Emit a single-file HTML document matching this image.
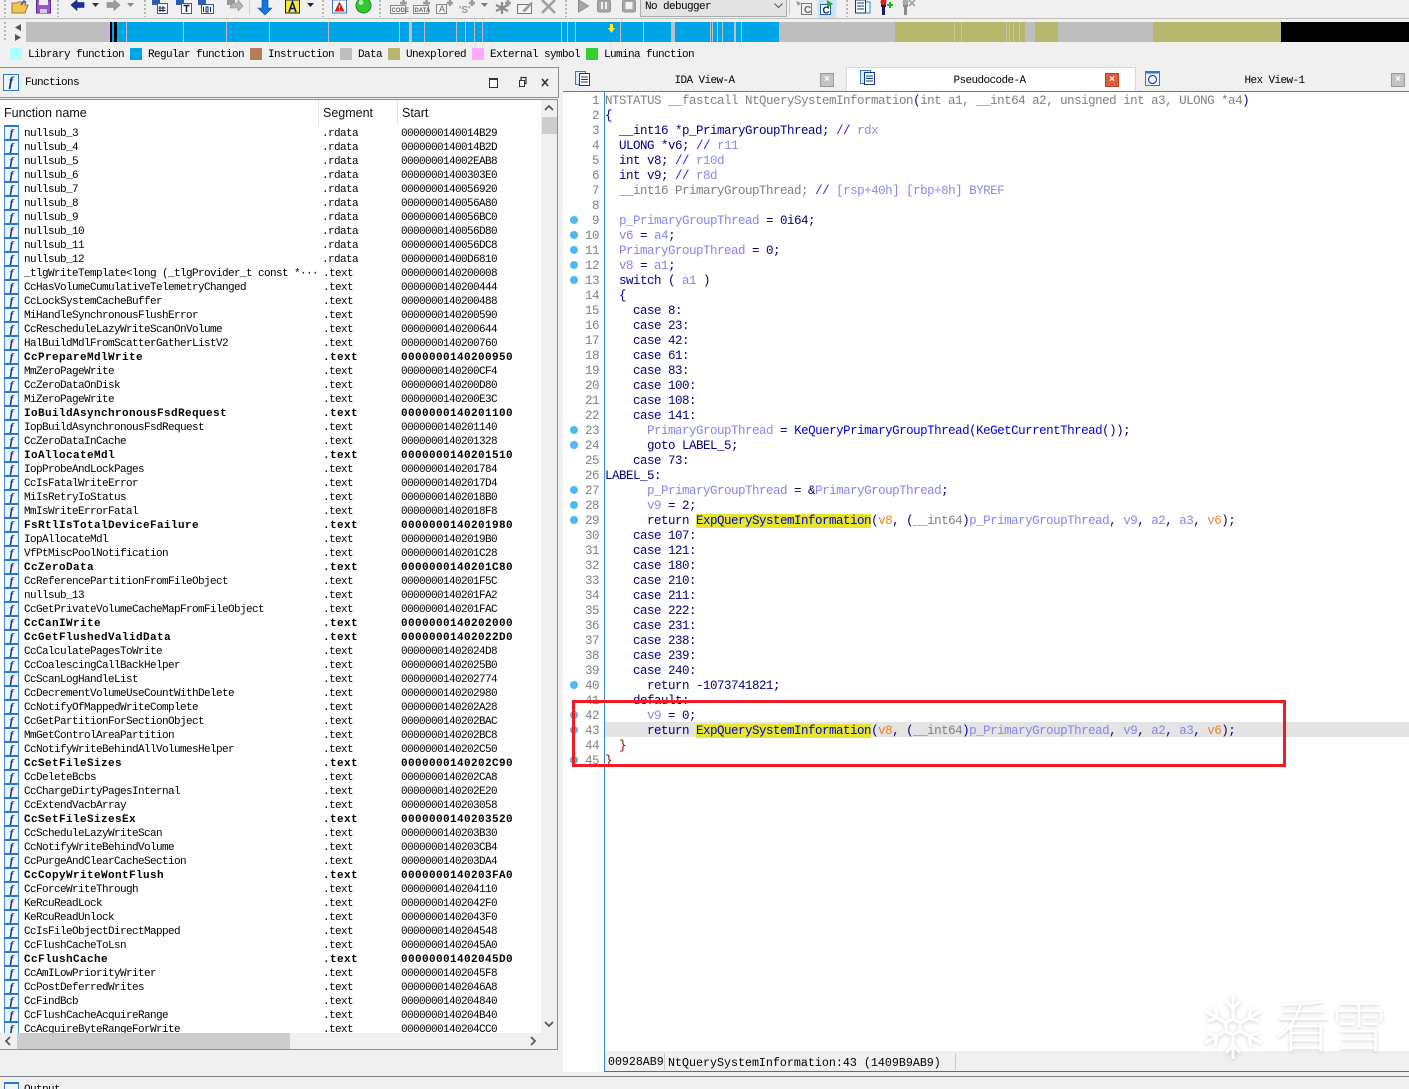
<!DOCTYPE html>
<html style="width:1409px;height:1089px;overflow:hidden"><head><meta charset="utf-8"><title>IDA</title>
<style>
html,body{margin:0;padding:0}
body{width:1409px;height:1089px;overflow:hidden;background:#f0f0f0;position:relative;font-family:"Liberation Mono",monospace;color:#000}
.a,.a2{position:absolute}
svg{position:absolute;overflow:visible}
.leg{position:absolute;top:49px;font-size:11px;letter-spacing:-.6px;line-height:13px;white-space:pre}
.sw{position:absolute;top:48px;width:12px;height:12px}
.nv{position:absolute;top:22px;height:20px}
.gp{position:absolute;top:22px;height:20px;width:1px;background:#b8c4cc}
.grip{position:absolute;top:0;width:2px;height:17px;background:repeating-linear-gradient(#b5b5b5 0 2px,transparent 2px 4px)}
#list{position:absolute;left:0;top:125px;width:541px;height:908px;overflow:hidden;background:#fff}
#list p{margin:0;height:14px;position:relative;font-size:11px;line-height:14px;letter-spacing:-.6px;white-space:pre}
#list i{position:absolute;left:4px;top:0;width:13px;height:12px;border:1px solid #4a8ed6;border-top:2px solid #2f78cc;border-bottom:0;background:#eef5fc;font:italic bold 12px/12px "Liberation Serif",serif;color:#123a80;text-align:center;letter-spacing:0}
#list b,#list u,#list s{position:absolute;top:2px;text-decoration:none;font-weight:normal}
#list b{left:24px}#list u{left:322px}#list s{left:401px}
#list u.t{left:323px}
#list p.h b,#list p.h u,#list p.h s{font-weight:bold;letter-spacing:.4px}
#code{position:absolute;left:0;top:92px;width:1409px;font-size:12.5px;line-height:15px;letter-spacing:-.5px;color:#000080}
#code div{position:relative;height:15px;box-sizing:border-box;padding-left:605px;padding-top:2px;white-space:pre}
#code div>em{position:absolute;left:563px;width:36px;text-align:right;font-style:normal;color:#808080}
#code div.d::before{content:"";position:absolute;left:570px;top:4px;width:8px;height:8px;border-radius:50%;background:#4fb8f2}
.g{color:#808080}.l{color:#8585ee}.c{color:#2222ee}.f{color:#0000e0}.o{color:#f08020}.y{background:#e6e632;color:#0000c8}.m{color:#800000}.t{color:#8a8aee}
#list u.t{color:#000}
.tab{position:absolute;top:68px;height:23px;font-size:11px;letter-spacing:-.6px;line-height:26px;text-align:center}
.x{position:absolute;top:73px;width:12px;height:12px;border:1px solid #999;background:#c4c4c4;color:#fff;font:bold 10px/12px "Liberation Sans",sans-serif;text-align:center}
.hd{position:absolute;top:105px;font:12.5px/16px "Liberation Sans",sans-serif;color:#111}
</style></head>
<body>

<!-- toolbar -->
<div class="a" style="left:0;top:18px;width:1409px;height:1px;background:#bdbdbd"></div>
<div class="grip" style="left:4px"></div><div class="grip" style="left:57px"></div><div class="grip" style="left:144px"></div><div class="grip" style="left:322px"></div><div class="grip" style="left:379px"></div><div class="grip" style="left:565px"></div><div class="grip" style="left:846px"></div>
<div class="a" style="left:249px;top:0;width:1px;height:15px;background:#d0d0d0"></div>
<div class="a" style="left:789px;top:0;width:1px;height:15px;background:#c8c8c8"></div>

<svg style="left:0;top:0" width="1000" height="18" viewBox="0 0 1000 18">
<path d="M12 13V3h5l1-1h7v3h3l-3 8z" fill="#f2c552" stroke="#a57a1c"/><path d="M21 5l3-4 2 2" stroke="#2b5bc8" fill="none" stroke-width="1.5"/>
<path d="M36.500 0h14v13h-14z" fill="#9a55c8" stroke="#5a2a90"/><path d="M39 0h9v5h-9z" fill="#eee"/><path d="M40 9h7v4h-7z" fill="#d8c8e8"/>
<path d="M71 5l6-5v2.500h7v5h-7v3z" fill="#1c2f9c" stroke="#0c1a70" stroke-width=".6"/>
<path d="M92 3h7l-3.500 4z" fill="#333"/>
<path d="M120 5l-6-5v2.500h-7v5h7v3z" fill="#9c9c9c" stroke="#808080" stroke-width=".6"/>
<path d="M127 3h7l-3.500 4z" fill="#8a8a8a"/>
<g><path d="M152 0h8v5h-8z" fill="#2b5fae"/><rect x="157.500" y="3.500" width="10" height="10" fill="#fff" stroke="#2b5fae"/><path d="M160 6v6M163 6v6M158.500 8h7M158.500 10.500h7" stroke="#102050"/></g>
<g><path d="M176 0h8v5h-8z" fill="#2b5fae"/><rect x="181.500" y="3.500" width="10" height="10" fill="#fff" stroke="#2b5fae"/><path d="M183.500 5.500h6M186.500 5.500v6.500" stroke="#102050" stroke-width="1.500"/></g>
<g><path d="M198 0h8v5h-8z" fill="#2b5fae"/><rect x="201.500" y="4.500" width="12" height="9" fill="#fff" stroke="#2b5fae"/><path d="M203.500 7v5M206 7h2v5h-2zM210.500 7v5" stroke="#102050" fill="none"/></g>
<g><path d="M227 0h8v5h-8z" fill="#999"/><path d="M232 3h6V0l5 6-5 5V8h-8z" fill="#b5b5b5" stroke="#8a8a8a" stroke-width=".6"/></g>
<path d="M262 0h6v8h4l-7 7-7-7h4z" fill="#1474dc" stroke="#0d4fa8" stroke-width=".6"/>
<rect x="285.500" y="0" width="14" height="13" fill="#f4ec20" stroke="#10108a"/><path d="M289 12l3.500-10 3.500 10M290.200 8.500h4.600" stroke="#10108a" stroke-width="1.600" fill="none"/>
<path d="M307 3h7l-3.500 4z" fill="#222"/>
<rect x="332.500" y="0" width="14" height="13" fill="#fff" stroke="#3c78c8"/><path d="M339.500 1.500l5 10h-10z" fill="#d02020"/><path d="M339.500 5v3.500M339.500 9.500v1" stroke="#fff"/>
<circle cx="363.500" cy="5.500" r="7.500" fill="#32c832" stroke="#1c8c1c"/><circle cx="361" cy="2.500" r="2.500" fill="#a8f0a8"/>
<g stroke="#888" fill="#f6f6f6">
<rect x="390.500" y="5.500" width="15" height="8"/><rect x="413.500" y="5.500" width="15" height="8"/><rect x="436.500" y="4.500" width="10" height="9"/></g>
<g stroke="#999" stroke-width="2.400"><path d="M400 3h7M403.500 0v6M423 3h7M426.500 0v6M447 3h6M450 0v6M469 3h6M472 0v6M505 3h6M508 0v6"/></g>
<g font-family="Liberation Sans,sans-serif" fill="#666">
<text x="391.500" y="12" font-size="6" font-weight="bold">CODE</text>
<text x="414.500" y="12" font-size="6" font-weight="bold">DATA</text>
<text x="439" y="12" font-size="9">A</text>
<text x="459" y="13" font-size="10" font-weight="bold" fill="#999">'S'</text></g>
<path d="M481 3h7l-3.500 4z" fill="#777"/>
<path d="M502 2v12M496 5l12 6M508 5l-12 6" stroke="#8a8a8a" stroke-width="2.200"/>
<rect x="517.500" y="4.500" width="14" height="9" fill="#f4f4f4" stroke="#777"/><path d="M522 11l9-9 2 1-8 9z" fill="#999"/>
<path d="M542 0l13 13M555 0l-13 13" stroke="#a0a0a0" stroke-width="2.600"/>
<path d="M578.500 0v12l10-6z" fill="#a8a8a8" stroke="#8a8a8a"/>
<rect x="597.500" y="0" width="13" height="12" rx="2" fill="#a8a8a8" stroke="#909090"/><path d="M602 2v7M606 2v7" stroke="#eee" stroke-width="2"/>
<rect x="622.500" y="0" width="13" height="12" rx="2" fill="#a8a8a8" stroke="#909090"/><rect x="625.500" y="2" width="7" height="7" fill="#f4f4f4"/>
<rect x="817.500" y="0" width="19" height="18" fill="#cce4f7"/>
<rect x="801.500" y="3.500" width="10" height="11" fill="#f0f0f0" stroke="#777"/>
<path d="M796 1l5 2-3 3z" fill="#999"/>
<text x="804" y="13" font-family="Liberation Sans,sans-serif" font-size="10" font-weight="bold" fill="#666">C</text>
<rect x="820.500" y="4.500" width="10" height="10" fill="#fff" stroke="#2a5aa0"/><path d="M827 0l6 4-6 4z" fill="#2ea82e"/>
<text x="822.500" y="13.500" font-family="Liberation Sans,sans-serif" font-size="10" font-weight="bold" fill="#10206a">C</text>
<rect x="855.500" y="0" width="10" height="13" fill="#fff" stroke="#123a80"/><path d="M857 3h7M857 6h7M857 9h7" stroke="#123a80"/><path d="M866 2h4v11h-4" fill="#dff" stroke="#3a80d0"/>
<path d="M881 0h5v7h-1v8h-3V7h-1z" fill="#1a1a60"/><circle cx="883.500" cy="2" r="3" fill="#e02020"/><path d="M887 5h6M890 2v6" stroke="#20b020" stroke-width="2"/>
<path d="M903 0h5v7h-1v8h-3V7h-1z" fill="#8a8a8a"/><circle cx="905.500" cy="2" r="3" fill="#aaa"/><path d="M909 0l6 6M915 0l-6 6" stroke="#999" stroke-width="1.500"/>
</svg>
<div class="a" style="left:640px;top:-2px;width:145px;height:17px;border:1px solid #adadad;background:#e4e4e4;font-size:11px;letter-spacing:-.6px;line-height:17px;text-indent:4px">No debugger</div>
<svg style="left:774px;top:3px" width="9" height="6"><path d="M0.500 0.500l4 4 4-4" fill="none" stroke="#555"/></svg>

<!-- nav band -->
<div class="grip" style="left:4px;top:22px;height:20px"></div>
<svg style="left:12px;top:24px" width="10" height="18"><path d="M9 0v7L3 3.500z" fill="#555"/><path d="M3 10v7l6-3.500z" fill="#555"/></svg>
<div class="nv" style="left:26px;width:82px;background:#bebebe"></div>
<div class="nv" style="left:108px;width:2px;background:#e8a8e8"></div>
<div class="nv" style="left:110px;width:2px;background:#000"></div>
<div class="nv" style="left:112px;width:2px;background:#00a5e8"></div>
<div class="nv" style="left:114px;width:3px;background:#000"></div>
<div class="nv" style="left:117px;width:662px;background:#00a5e8"></div>
<div class="nv" style="left:779px;width:116px;background:#bebebe"></div>
<div class="nv" style="left:895px;width:130px;background:#b6b66c"></div>
<div class="nv" style="left:1025px;width:10px;background:#bebebe"></div>
<div class="nv" style="left:1035px;width:23px;background:#b6b66c"></div>
<div class="nv" style="left:1058px;width:95px;background:#bebebe"></div>
<div class="nv" style="left:1153px;width:128px;background:#b6b66c"></div>
<div class="nv" style="left:1281px;width:128px;background:#000"></div>
<div class="gp" style="left:126px"></div><div class="gp" style="left:183px"></div><div class="gp" style="left:226px"></div><div class="gp" style="left:269px"></div><div class="gp" style="left:328px"></div><div class="gp" style="left:399px"></div><div class="gp" style="left:409px;width:3px"></div><div class="gp" style="left:424px"></div><div class="gp" style="left:456px"></div><div class="gp" style="left:465px"></div><div class="gp" style="left:474px"></div><div class="gp" style="left:482px"></div><div class="gp" style="left:561px"></div><div class="gp" style="left:567px"></div><div class="gp" style="left:575px"></div><div class="gp" style="left:620px"></div><div class="gp" style="left:643px"></div><div class="gp" style="left:671px;width:4px"></div><div class="gp" style="left:710px"></div><div class="gp" style="left:712px"></div><div class="gp" style="left:717px"></div><div class="gp" style="left:722px"></div><div class="gp" style="left:734px;width:2px"></div><div class="gp" style="left:741px"></div>
<div class="gp" style="left:954px;background:#c8c8a0"></div><div class="gp" style="left:961px;background:#c8c8a0"></div><div class="gp" style="left:1006px;background:#c8c8a0"></div><div class="gp" style="left:1009px;background:#c8c8a0"></div><div class="gp" style="left:1013px;background:#c8c8a0"></div><div class="gp" style="left:1019px;background:#c8c8a0"></div>
<svg style="left:608px;top:24px" width="7" height="9"><path d="M2 0h3v4h2L3.500 9 0 4h2z" fill="#ffee30"/></svg>

<!-- legend -->
<div class="sw" style="left:10px;background:#aaffff"></div><div class="leg" style="left:28px">Library function</div>
<div class="sw" style="left:130px;background:#00a5e8"></div><div class="leg" style="left:148px">Regular function</div>
<div class="sw" style="left:250px;background:#b47c5c"></div><div class="leg" style="left:268px">Instruction</div>
<div class="sw" style="left:340px;background:#bebebe"></div><div class="leg" style="left:358px">Data</div>
<div class="sw" style="left:388px;background:#b6b66c"></div><div class="leg" style="left:406px">Unexplored</div>
<div class="sw" style="left:472px;background:#ffaaff"></div><div class="leg" style="left:490px">External symbol</div>
<div class="sw" style="left:586px;background:#30d030"></div><div class="leg" style="left:604px">Lumina function</div>

<!-- functions panel -->
<div class="a" style="left:0;top:67px;width:558px;height:29px;border-top:1px solid #8a8f96;border-bottom:1px solid #8a8f96;border-right:1px solid #8a8f96;background:#f0f0f0"></div>
<div class="a" style="left:3px;top:74px;width:14px;height:15px;border:1px solid #2f78cc;background:#eef5fc;font:italic bold 14px/15px 'Liberation Serif',serif;color:#123a80;text-align:center">f</div>
<div class="a" style="left:25px;top:75px;font-size:11px;letter-spacing:-.6px;line-height:13px;margin-top:1.500px">Functions</div>
<svg style="left:488px;top:76px" width="60" height="14"><rect x="1.500" y="2.500" width="8" height="9" fill="#fff" stroke="#333"/><path d="M1 3h9" stroke="#333" stroke-width="2"/><rect x="31.500" y="4.500" width="5" height="6" fill="#fff" stroke="#333"/><path d="M33 4V1.500h5v6h-1" fill="none" stroke="#333" stroke-width="1.200"/><path d="M54 3l6 7M60 3l-6 7" stroke="#333" stroke-width="1.600"/></svg>
<div class="a" style="left:0;top:99px;width:558px;border-top:1px solid #8a8f96;border-bottom:1px solid #8a8f96;border-right:1px solid #8a8f96;box-sizing:border-box;height:951px;background:#fff"></div>
<div class="a" style="left:318px;top:100px;width:1px;height:25px;background:#e2e2e2"></div>
<div class="a" style="left:397px;top:100px;width:1px;height:25px;background:#e2e2e2"></div>
<div class="hd" style="left:4px">Function name</div>
<div class="hd" style="left:323px">Segment</div>
<div class="hd" style="left:402px">Start</div>

<div id="list">
<p><i>f</i><b>nullsub_3</b><u>.rdata</u><s>0000000140014B29</s></p>
<p><i>f</i><b>nullsub_4</b><u>.rdata</u><s>0000000140014B2D</s></p>
<p><i>f</i><b>nullsub_5</b><u>.rdata</u><s>000000014002EAB8</s></p>
<p><i>f</i><b>nullsub_6</b><u>.rdata</u><s>00000001400303E0</s></p>
<p><i>f</i><b>nullsub_7</b><u>.rdata</u><s>0000000140056920</s></p>
<p><i>f</i><b>nullsub_8</b><u>.rdata</u><s>0000000140056A80</s></p>
<p><i>f</i><b>nullsub_9</b><u>.rdata</u><s>0000000140056BC0</s></p>
<p><i>f</i><b>nullsub_10</b><u>.rdata</u><s>0000000140056D80</s></p>
<p><i>f</i><b>nullsub_11</b><u>.rdata</u><s>0000000140056DC8</s></p>
<p><i>f</i><b>nullsub_12</b><u>.rdata</u><s>00000001400D6810</s></p>
<p><i>f</i><b>_tlgWriteTemplate&lt;long (_tlgProvider_t const *···</b><u class="t">.text</u><s>0000000140200008</s></p>
<p><i>f</i><b>CcHasVolumeCumulativeTelemetryChanged</b><u class="t">.text</u><s>0000000140200444</s></p>
<p><i>f</i><b>CcLockSystemCacheBuffer</b><u class="t">.text</u><s>0000000140200488</s></p>
<p><i>f</i><b>MiHandleSynchronousFlushError</b><u class="t">.text</u><s>0000000140200590</s></p>
<p><i>f</i><b>CcRescheduleLazyWriteScanOnVolume</b><u class="t">.text</u><s>0000000140200644</s></p>
<p><i>f</i><b>HalBuildMdlFromScatterGatherListV2</b><u class="t">.text</u><s>0000000140200760</s></p>
<p class="h"><i>f</i><b>CcPrepareMdlWrite</b><u class="t">.text</u><s>0000000140200950</s></p>
<p><i>f</i><b>MmZeroPageWrite</b><u class="t">.text</u><s>0000000140200CF4</s></p>
<p><i>f</i><b>CcZeroDataOnDisk</b><u class="t">.text</u><s>0000000140200D80</s></p>
<p><i>f</i><b>MiZeroPageWrite</b><u class="t">.text</u><s>0000000140200E3C</s></p>
<p class="h"><i>f</i><b>IoBuildAsynchronousFsdRequest</b><u class="t">.text</u><s>0000000140201100</s></p>
<p><i>f</i><b>IopBuildAsynchronousFsdRequest</b><u class="t">.text</u><s>0000000140201140</s></p>
<p><i>f</i><b>CcZeroDataInCache</b><u class="t">.text</u><s>0000000140201328</s></p>
<p class="h"><i>f</i><b>IoAllocateMdl</b><u class="t">.text</u><s>0000000140201510</s></p>
<p><i>f</i><b>IopProbeAndLockPages</b><u class="t">.text</u><s>0000000140201784</s></p>
<p><i>f</i><b>CcIsFatalWriteError</b><u class="t">.text</u><s>00000001402017D4</s></p>
<p><i>f</i><b>MiIsRetryIoStatus</b><u class="t">.text</u><s>00000001402018B0</s></p>
<p><i>f</i><b>MmIsWriteErrorFatal</b><u class="t">.text</u><s>00000001402018F8</s></p>
<p class="h"><i>f</i><b>FsRtlIsTotalDeviceFailure</b><u class="t">.text</u><s>0000000140201980</s></p>
<p><i>f</i><b>IopAllocateMdl</b><u class="t">.text</u><s>00000001402019B0</s></p>
<p><i>f</i><b>VfPtMiscPoolNotification</b><u class="t">.text</u><s>0000000140201C28</s></p>
<p class="h"><i>f</i><b>CcZeroData</b><u class="t">.text</u><s>0000000140201C80</s></p>
<p><i>f</i><b>CcReferencePartitionFromFileObject</b><u class="t">.text</u><s>0000000140201F5C</s></p>
<p><i>f</i><b>nullsub_13</b><u class="t">.text</u><s>0000000140201FA2</s></p>
<p><i>f</i><b>CcGetPrivateVolumeCacheMapFromFileObject</b><u class="t">.text</u><s>0000000140201FAC</s></p>
<p class="h"><i>f</i><b>CcCanIWrite</b><u class="t">.text</u><s>0000000140202000</s></p>
<p class="h"><i>f</i><b>CcGetFlushedValidData</b><u class="t">.text</u><s>00000001402022D0</s></p>
<p><i>f</i><b>CcCalculatePagesToWrite</b><u class="t">.text</u><s>00000001402024D8</s></p>
<p><i>f</i><b>CcCoalescingCallBackHelper</b><u class="t">.text</u><s>00000001402025B0</s></p>
<p><i>f</i><b>CcScanLogHandleList</b><u class="t">.text</u><s>0000000140202774</s></p>
<p><i>f</i><b>CcDecrementVolumeUseCountWithDelete</b><u class="t">.text</u><s>0000000140202980</s></p>
<p><i>f</i><b>CcNotifyOfMappedWriteComplete</b><u class="t">.text</u><s>0000000140202A28</s></p>
<p><i>f</i><b>CcGetPartitionForSectionObject</b><u class="t">.text</u><s>0000000140202BAC</s></p>
<p><i>f</i><b>MmGetControlAreaPartition</b><u class="t">.text</u><s>0000000140202BC8</s></p>
<p><i>f</i><b>CcNotifyWriteBehindAllVolumesHelper</b><u class="t">.text</u><s>0000000140202C50</s></p>
<p class="h"><i>f</i><b>CcSetFileSizes</b><u class="t">.text</u><s>0000000140202C90</s></p>
<p><i>f</i><b>CcDeleteBcbs</b><u class="t">.text</u><s>0000000140202CA8</s></p>
<p><i>f</i><b>CcChargeDirtyPagesInternal</b><u class="t">.text</u><s>0000000140202E20</s></p>
<p><i>f</i><b>CcExtendVacbArray</b><u class="t">.text</u><s>0000000140203058</s></p>
<p class="h"><i>f</i><b>CcSetFileSizesEx</b><u class="t">.text</u><s>0000000140203520</s></p>
<p><i>f</i><b>CcScheduleLazyWriteScan</b><u class="t">.text</u><s>0000000140203B30</s></p>
<p><i>f</i><b>CcNotifyWriteBehindVolume</b><u class="t">.text</u><s>0000000140203CB4</s></p>
<p><i>f</i><b>CcPurgeAndClearCacheSection</b><u class="t">.text</u><s>0000000140203DA4</s></p>
<p class="h"><i>f</i><b>CcCopyWriteWontFlush</b><u class="t">.text</u><s>0000000140203FA0</s></p>
<p><i>f</i><b>CcForceWriteThrough</b><u class="t">.text</u><s>0000000140204110</s></p>
<p><i>f</i><b>KeRcuReadLock</b><u class="t">.text</u><s>00000001402042F0</s></p>
<p><i>f</i><b>KeRcuReadUnlock</b><u class="t">.text</u><s>00000001402043F0</s></p>
<p><i>f</i><b>CcIsFileObjectDirectMapped</b><u class="t">.text</u><s>0000000140204548</s></p>
<p><i>f</i><b>CcFlushCacheToLsn</b><u class="t">.text</u><s>00000001402045A0</s></p>
<p class="h"><i>f</i><b>CcFlushCache</b><u class="t">.text</u><s>00000001402045D0</s></p>
<p><i>f</i><b>CcAmILowPriorityWriter</b><u class="t">.text</u><s>00000001402045F8</s></p>
<p><i>f</i><b>CcPostDeferredWrites</b><u class="t">.text</u><s>00000001402046A8</s></p>
<p><i>f</i><b>CcFindBcb</b><u class="t">.text</u><s>0000000140204840</s></p>
<p><i>f</i><b>CcFlushCacheAcquireRange</b><u class="t">.text</u><s>0000000140204B40</s></p>
<p><i>f</i><b>CcAcquireByteRangeForWrite</b><u class="t">.text</u><s>0000000140204CC0</s></p>
</div>

<!-- scrollbars -->
<div class="a" style="left:541px;top:100px;width:16px;height:933px;background:#f0f0f0"></div>
<div class="a" style="left:542px;top:117px;width:15px;height:17px;background:#cdcdcd"></div>
<svg style="left:544px;top:104px" width="10" height="8"><path d="M1 6l4-4 4 4" fill="none" stroke="#555" stroke-width="1.700"/></svg>
<svg style="left:544px;top:1020px" width="10" height="8"><path d="M1 2l4 4 4-4" fill="none" stroke="#555" stroke-width="1.700"/></svg>
<div class="a" style="left:0;top:1033px;width:557px;height:16px;background:#f0f0f0"></div>
<div class="a" style="left:17px;top:1033px;width:273px;height:16px;background:#cdcdcd"></div>
<svg style="left:4px;top:1036px" width="8" height="10"><path d="M6 1L2 5l4 4" fill="none" stroke="#555" stroke-width="1.700"/></svg>
<svg style="left:529px;top:1036px" width="8" height="10"><path d="M2 1l4 4-4 4" fill="none" stroke="#555" stroke-width="1.700"/></svg>

<!-- right tabs -->
<div class="a" style="left:563px;top:92px;width:846px;height:980px;background:#fff"></div>
<div class="tab" style="left:565px;width:279px;background:#f0f0f0;padding-right:2px">IDA View-A</div>
<div class="tab" style="left:847px;width:285px;background:#fff;box-shadow:0 0 0 1px #d8d8d8;padding-right:3px">Pseudocode-A</div>
<div class="tab" style="left:1136px;width:273px;background:#f0f0f0;text-indent:4px">Hex View-1</div>
<div class="a" style="left:563px;top:91px;width:846px;height:1px;background:#3b86c8"></div>
<svg style="left:575px;top:71px" width="16" height="16"><rect x="0.500" y="0.500" width="10" height="13" fill="#dcecfb" stroke="#2f78cc"/><rect x="4.500" y="2.500" width="10" height="12" fill="#fff" stroke="#123a80"/><path d="M6 6h7M6 8.500h7M6 11h7" stroke="#123a80"/></svg>
<svg style="left:860px;top:70px" width="16" height="16"><rect x="0.500" y="0.500" width="10" height="13" fill="#dcecfb" stroke="#2f78cc"/><rect x="4.500" y="2.500" width="10" height="12" fill="#fff" stroke="#123a80"/><path d="M6 6h7M6 8.500h7M6 11h7" stroke="#123a80"/></svg>
<svg style="left:1145px;top:71px" width="16" height="16"><rect x="0.500" y="0.500" width="14" height="14" fill="#eef5fc" stroke="#2f78cc"/><path d="M1 1.500h13" stroke="#2f78cc" stroke-width="2"/><circle cx="7.500" cy="8.500" r="4" fill="#fff" stroke="#2a3fc0" stroke-width="1.200"/></svg>
<div class="x" style="left:820px">×</div>
<div class="x" style="left:1105px;background:#e05a3c;border-color:#c04020">×</div>
<div class="x" style="left:1391px">×</div>

<!-- code -->
<div id="code"><div><em>1</em><span class="g">NTSTATUS __fastcall NtQuerySystemInformation</span>(<span class="g">int a1, __int64 a2, unsigned int a3, ULONG *a4</span>)</div><div><em>2</em>{</div><div><em>3</em>  __int16 *p_PrimaryGroupThread; <span class="c">//</span> <span class="t">rdx</span></div><div><em>4</em>  ULONG *v6; <span class="c">//</span> <span class="t">r11</span></div><div><em>5</em>  int v8; <span class="c">//</span> <span class="t">r10d</span></div><div><em>6</em>  int v9; <span class="c">//</span> <span class="t">r8d</span></div><div><em>7</em>  <span class="g">__int16 PrimaryGroupThread;</span> <span class="c">//</span> <span class="t">[rsp+40h] [rbp+8h] BYREF</span></div><div><em>8</em></div><div class="d"><em>9</em>  <span class="l">p_PrimaryGroupThread</span> = 0i64;</div><div class="d"><em>10</em>  <span class="l">v6</span> = <span class="l">a4</span>;</div><div class="d"><em>11</em>  <span class="l">PrimaryGroupThread</span> = 0;</div><div class="d"><em>12</em>  <span class="l">v8</span> = <span class="l">a1</span>;</div><div class="d"><em>13</em>  switch ( <span class="l">a1</span> )</div><div><em>14</em>  {</div><div><em>15</em>    case 8:</div><div><em>16</em>    case 23:</div><div><em>17</em>    case 42:</div><div><em>18</em>    case 61:</div><div><em>19</em>    case 83:</div><div><em>20</em>    case 100:</div><div><em>21</em>    case 108:</div><div><em>22</em>    case 141:</div><div class="d"><em>23</em>      <span class="l">PrimaryGroupThread</span> = <span class="f">KeQueryPrimaryGroupThread</span>(<span class="f">KeGetCurrentThread</span>());</div><div class="d"><em>24</em>      goto LABEL_5;</div><div><em>25</em>    case 73:</div><div><em>26</em>LABEL_5:</div><div class="d"><em>27</em>      <span class="l">p_PrimaryGroupThread</span> = &amp;<span class="l">PrimaryGroupThread</span>;</div><div class="d"><em>28</em>      <span class="l">v9</span> = 2;</div><div class="d"><em>29</em>      return <span class="y">ExpQuerySystemInformation</span>(<span class="o">v8</span>, (<span class="g">__int64</span>)<span class="l">p_PrimaryGroupThread</span>, <span class="l">v9</span>, <span class="l">a2</span>, <span class="l">a3</span>, <span class="o">v6</span>);</div><div><em>30</em>    case 107:</div><div><em>31</em>    case 121:</div><div><em>32</em>    case 180:</div><div><em>33</em>    case 210:</div><div><em>34</em>    case 211:</div><div><em>35</em>    case 222:</div><div><em>36</em>    case 231:</div><div><em>37</em>    case 238:</div><div><em>38</em>    case 239:</div><div><em>39</em>    case 240:</div><div class="d"><em>40</em>      return -1073741821;</div><div><em>41</em>    default:</div><div class="d"><em>42</em>      <span class="l">v9</span> = 0;</div><div class="d" style="background:#e4e4e4;background-clip:content-box;padding-top:0"><span style="position:relative;top:2px"><em style="position:absolute;left:-42px;width:36px;text-align:right;font-style:normal;color:#808080">43</em>      return <span class="y">ExpQuerySystemInformation</span>(<span class="o">v8</span>, (<span class="g">__int64</span>)<span class="l">p_PrimaryGroupThread</span>, <span class="l">v9</span>, <span class="l">a2</span>, <span class="l">a3</span>, <span class="o">v6</span>);</span></div><div><em>44</em>  <span class="m">}</span></div><div class="d"><em>45</em><span class="m">}</span></div></div>

<!-- blue left border + status -->
<div class="a" style="left:604px;top:92px;width:1px;height:980px;background:#3b86c8"></div>
<div class="a" style="left:605px;top:1051px;width:804px;height:20px;background:#f0f0f0"></div>
<div class="a" style="left:604px;top:1071px;width:805px;height:1px;background:#2a78c4"></div>
<div class="a" style="left:664px;top:1053px;width:1px;height:17px;background:#c8c8c8"></div>
<div class="a" style="left:955px;top:1053px;width:1px;height:17px;background:#c8c8c8"></div>
<div class="a" style="left:608px;top:1056px;font-size:11.600px;line-height:14px">00928AB9</div>
<div class="a" style="left:668px;top:1056px;font-size:11.670px;line-height:14px;white-space:pre">NtQuerySystemInformation:43 (1409B9AB9)</div>

<!-- bottom -->
<div class="a" style="left:0;top:1076px;width:1409px;height:1px;background:#7a8088"></div>
<div class="a" style="left:4px;top:1082px;width:13px;height:12px;border:1px solid #2f78cc;border-top:2px solid #2f78cc;background:#eef5fc"></div>
<div class="a" style="left:24px;top:1084px;font-size:11px;letter-spacing:-.6px;line-height:13px">Output</div>

<!-- red rect -->
<div class="a" style="left:572px;top:700px;width:708px;height:61px;border:3px solid #ee1c25"></div>

<!-- watermark -->
<svg style="left:1198px;top:992px;filter:drop-shadow(0 1px 2px rgba(0,0,0,.18))" width="70" height="70" viewBox="-35 -35 70 70">
<g stroke="#fff" stroke-width="3" fill="none">
<path d="M0-32V-9M0 9V32M-28-16L-8-4.500M8 4.500L28 16M-28 16L-8 4.500M8-4.500L28-16"/>
<path d="M-7-26L0-18 7-26M-7 26L0 18 7 26M-26-6L-16-9-18-19M26 6L16 9 18 19M-26 6L-16 9-18 19M26-6L16-9 18-19"/>
<path d="M0-8L7-4V4L0 8-7 4V-4z"/></g></svg>
<div class="a" style="left:1275px;top:989px;font:300 56px/70px 'Noto Sans CJK SC',sans-serif;color:#fff;text-shadow:0 1px 3px rgba(0,0,0,.2);white-space:nowrap">看雪</div>
</body></html>
